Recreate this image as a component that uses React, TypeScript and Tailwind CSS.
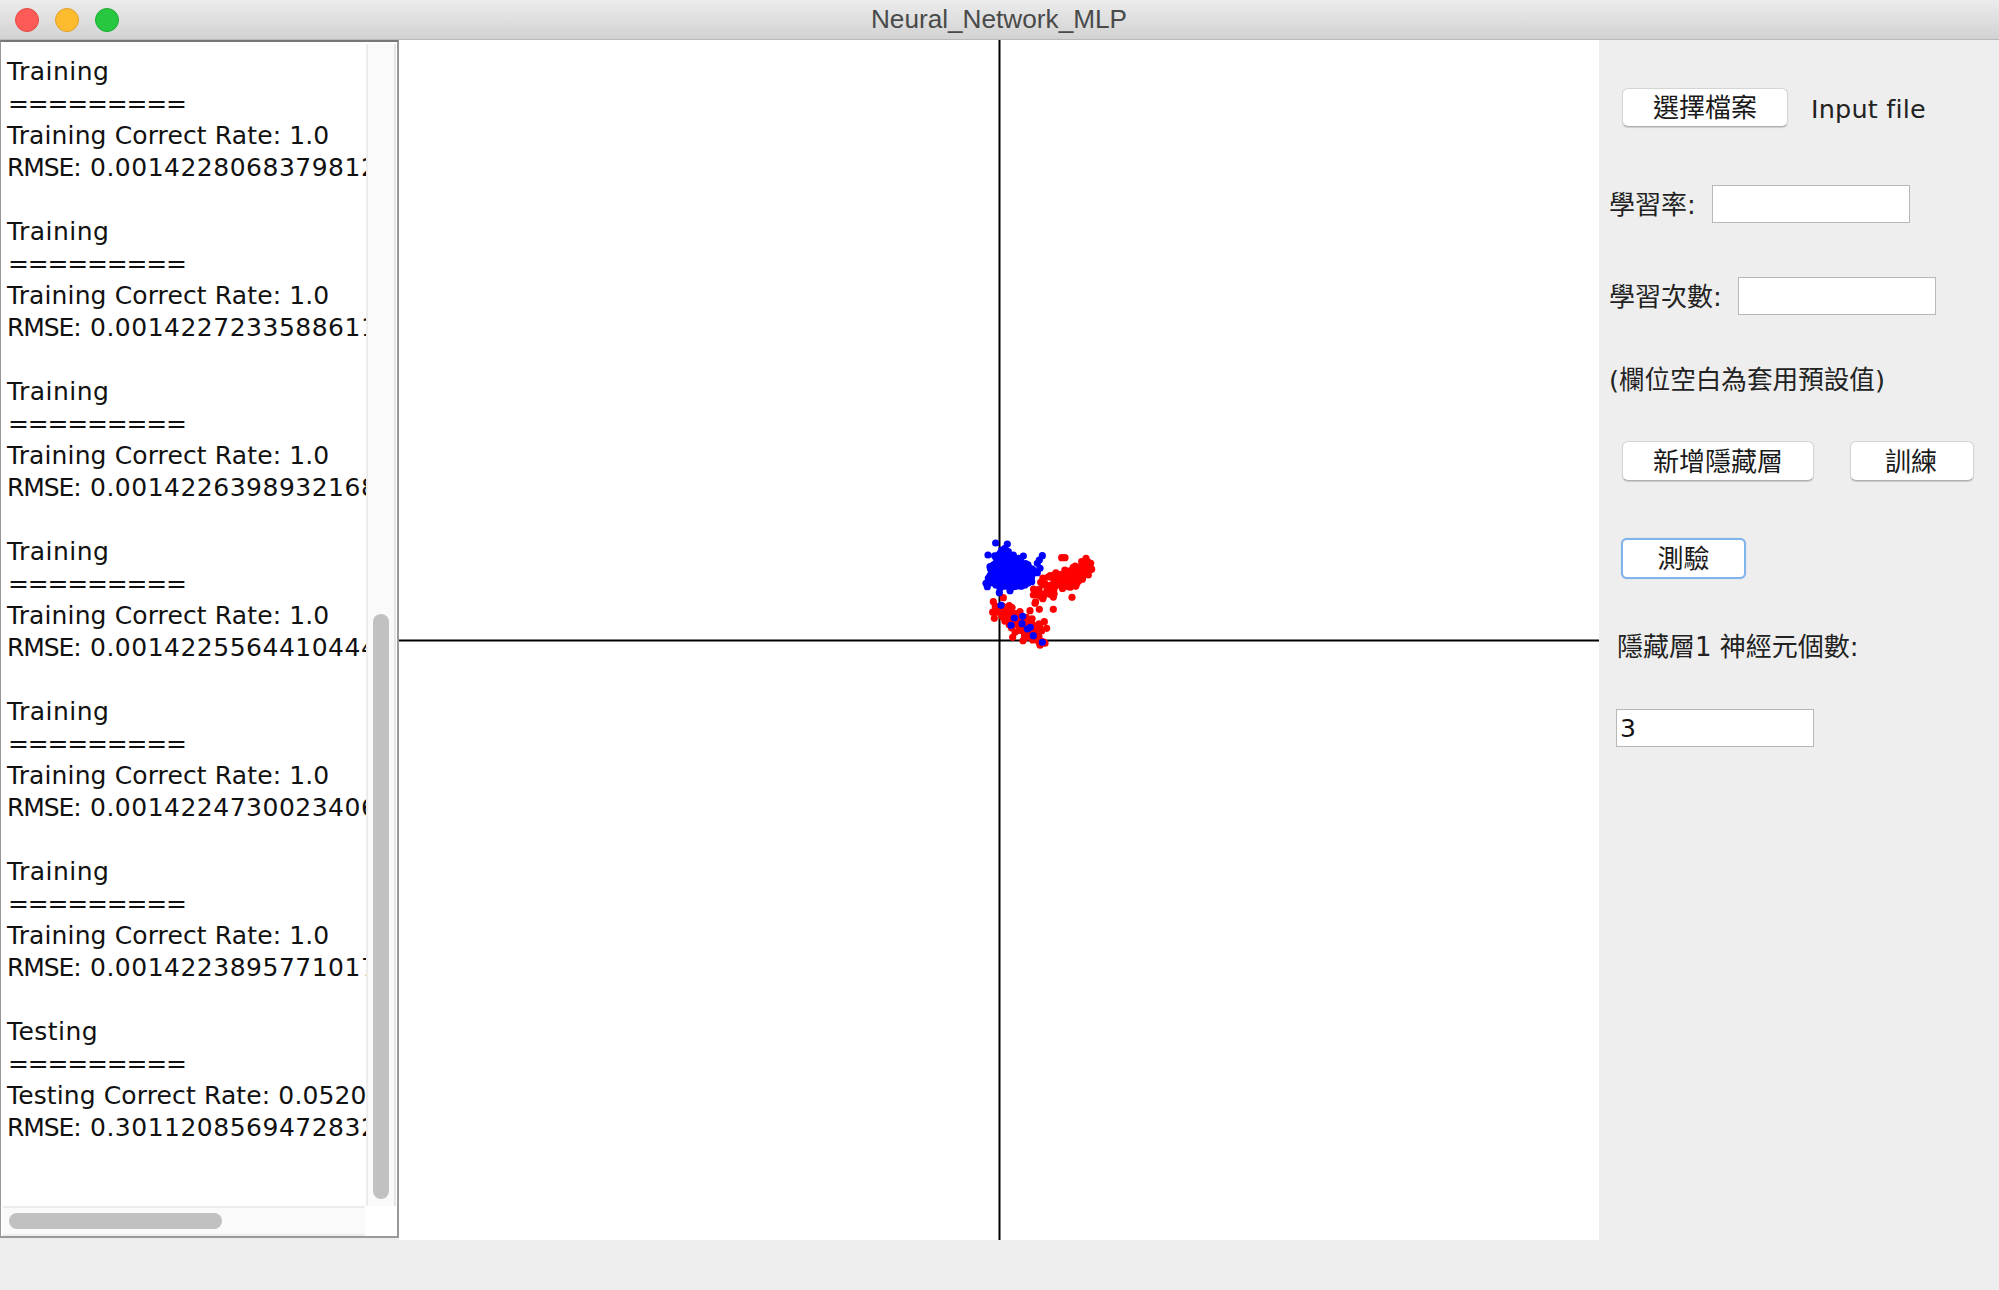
import React from "react";

const LOG_FONT = "font-['DejaVu_Sans','Noto_Sans_CJK_TC',sans-serif]";

const blocks = [
  ["Training", "Training Correct Rate: 1.0", "0.001422806837981234"],
  ["Training", "Training Correct Rate: 1.0", "0.001422723358861134"],
  ["Training", "Training Correct Rate: 1.0", "0.001422639893216834"],
  ["Training", "Training Correct Rate: 1.0", "0.001422556441044434"],
  ["Training", "Training Correct Rate: 1.0", "0.001422473002340634"],
  ["Training", "Training Correct Rate: 1.0", "0.001422389577101734"],
  ["Testing", "Testing Correct Rate: 0.052083", "0.301120856947283234"],
];

function rng(seed: number) {
  let a = seed;
  return () => {
    a = (a + 0x6d2b79f5) | 0;
    let t = Math.imul(a ^ (a >>> 15), 1 | a);
    t = (t + Math.imul(t ^ (t >>> 7), 61 | t)) ^ t;
    return ((t ^ (t >>> 14)) >>> 0) / 4294967296;
  };
}
const r = rng(12345);
const blob = (n: number, cx: number, cy: number, sx: number, sy: number) =>
  Array.from({ length: n }, () => {
    const a = r() * Math.PI * 2;
    const d = Math.sqrt(r());
    return [cx + Math.cos(a) * d * sx, cy + Math.sin(a) * d * sy];
  });
const band = (n: number, x1: number, y1: number, x2: number, y2: number, w: number) =>
  Array.from({ length: n }, () => {
    const t = r();
    return [x1 + (x2 - x1) * t + (r() - 0.5) * w, y1 + (y2 - y1) * t + (r() - 0.5) * w];
  });

const blueZoom = [
  ...blob(170, 182, 162, 68, 44),
  ...blob(25, 155, 120, 30, 30),
  [137, 69], [172, 72], [114, 105], [155, 90], [165, 85], [190, 105], [220, 108], [277, 107], [268, 120], [262, 130],
  [270, 145], [262, 158], [245, 185], [112, 200], [108, 190], [148, 218], [180, 212], [150, 205], [150, 100], [175, 95],
  [120, 140], [125, 165], [205, 115], [235, 140], [250, 150], [115, 175],
];
const redZoom = [
  ...band(110, 265, 222, 402, 150, 56),
  ...band(120, 145, 262, 278, 358, 46),
  [335, 113], [345, 113], [408, 115], [422, 130], [272, 187], [366, 232], [310, 268], [268, 268],
  [133, 295], [160, 233], [188, 352], [219, 362], [283, 305], [290, 325], [210, 275], [130, 245], [240, 272],
  [420, 150], [395, 125], [255, 250], [250, 225], [415, 165],
];
const blueOnRed = [
  [153, 256], [193, 294], [218, 289], [183, 316], [216, 311], [232, 327], [241, 322], [250, 347], [277, 367],
];
const toCanvas = (p: number[]) => [551 + p[0] / 3, 480 + p[1] / 3];

function Scatter() {
  return (
    <svg width="1200" height="1200" viewBox="0 0 1200 1200" className="block">
      <rect width="1200" height="1200" fill="#fff" />
      <line x1="600.5" y1="0" x2="600.5" y2="1200" stroke="#000" strokeWidth="2" />
      <line x1="0" y1="600.5" x2="1200" y2="600.5" stroke="#000" strokeWidth="2" />
      {redZoom.map((p, i) => {
        const [x, y] = toCanvas(p);
        return <circle key={"r" + i} cx={x} cy={y} r="3.6" fill="#ff0000" />;
      })}
      {[...blueZoom, ...blueOnRed].map((p, i) => {
        const [x, y] = toCanvas(p);
        return <circle key={"b" + i} cx={x} cy={y} r="3.6" fill="#0000ff" />;
      })}
    </svg>
  );
}

function MacButton({ children, className }: { children: React.ReactNode; className: string }) {
  return (
    <div
      className={
        "flex h-[39px] items-center justify-center rounded-[6px] border border-[#d4d4d4] border-b-[#b0b0b0] bg-white text-[26px] text-[#1a1a1a] shadow-[0_1px_1px_rgba(0,0,0,0.15)] " +
        className
      }
    >
      {children}
    </div>
  );
}

function Field({ value }: { value?: string }) {
  return (
    <div className="flex h-[38px] w-[198px] items-center border border-[#b8b8b8] bg-white pl-[3px] pt-[2px] text-[25px] text-[#111]">
      {value}
    </div>
  );
}

export default function App() {
  return (
    <div className={"flex h-[1290px] w-[1999px] flex-col overflow-hidden bg-[#eeeeee] " + LOG_FONT}>
      <div className="relative flex h-[40px] shrink-0 items-center border-b border-[#b9b9b9] bg-gradient-to-b from-[#ececec] to-[#d2d2d2]">
        <div className="ml-[15px] flex gap-[16px]">
          <span className="h-[24px] w-[24px] rounded-full border border-[#e24b44] bg-[#fc5b57]" />
          <span className="h-[24px] w-[24px] rounded-full border border-[#e1a02a] bg-[#fdbb2e]" />
          <span className="h-[24px] w-[24px] rounded-full border border-[#1aab32] bg-[#27c83f]" />
        </div>
        <div className="absolute inset-x-0 top-0 pr-[1px] text-center font-['Liberation_Sans',sans-serif] text-[26.2px] leading-[38px] text-[#4a4a4a]">
          Neural_Network_MLP
        </div>
      </div>

      <div className="flex h-[1200px] shrink-0">
        <div className="flex h-[1198px] w-[399px] shrink-0 flex-col border-t-2 border-r-2 border-b-2 border-l border-t-[#777] border-r-[#999] border-b-[#999] border-l-[#999] bg-white">
          <div className="flex min-h-0 flex-1">
            <div className="h-full min-w-0 flex-1 overflow-hidden pl-[6px] pt-[14px] text-[25px] leading-[32px] tracking-[0.1px] text-[#111] whitespace-nowrap">
              {blocks.map((b, i) => (
                <div key={i} className="h-[160px]">
                  <div className="tracking-[0.45px]">{b[0]}</div>
                  <div className="pl-[1px] tracking-[-1.2px]">=========</div>
                  <div className="tracking-[0.12px]">{b[1]}</div>
                  <div>
                    <span className="tracking-[-1.1px]">RMSE:</span>
                    <span className="ml-[1px] tracking-[0.5px]"> {b[2]}</span>
                  </div>
                </div>
              ))}
            </div>
            <div className="mr-[1px] mt-[2px] w-[30px] shrink-0 border-x-2 border-x-[#ececec] border-r-[#e6e6e6] bg-[#fafafa] pl-[5px] pt-[570px]">
              <div className="h-[585px] w-[16px] rounded-full bg-[#c1c1c1]" />
            </div>
          </div>
          <div className="flex h-[30px] shrink-0">
            <div className="ml-[2px] flex w-[362px] items-center border-y-2 border-y-[#ececec] bg-[#fafafa] pl-[6px]">
              <div className="h-[16px] w-[213px] rounded-full bg-[#c1c1c1]" />
            </div>
          </div>
        </div>

        <div className="w-[1200px] shrink-0">
          <Scatter />
        </div>

        <div className="min-w-0 flex-1 pt-[48px] text-[26px] leading-[32px] text-[#222]">
          <div className="flex items-center pl-[23px]">
            <MacButton className="w-[166px]">選擇檔案</MacButton>
            <span className="ml-[23px] mt-[2px] text-[25.5px] tracking-[0.2px]">Input file</span>
          </div>

          <div className="mt-[58px] flex items-center pl-[10px]">
            <span className="mt-[2px] w-[103px]">學習率:</span>
            <Field />
          </div>

          <div className="mt-[54px] flex items-center pl-[10px]">
            <span className="mt-[2px] w-[129px]">學習次數:</span>
            <Field />
          </div>

          <div className="mt-[49px] pl-[10px] text-[25.6px]">(欄位空白為套用預設值)</div>

          <div className="mt-[45px] flex pl-[23px]">
            <MacButton className="h-[40px] w-[192px] pt-[1px]">新增隱藏層</MacButton>
            <MacButton className="ml-[36px] h-[40px] w-[124px] pt-[1px] pr-[2px]">訓練</MacButton>
          </div>

          <div className="mt-[57px] pl-[22px]">
            <div className="flex h-[41px] w-[125px] items-center justify-center rounded-[6px] border-2 border-[#82b4ec] bg-white text-[26px] text-[#1a1a1a] shadow-[0_0_1px_#82b4ec]">
              測驗
            </div>
          </div>

          <div className="mt-[52px] pl-[18px]">隱藏層1 神經元個數:</div>

          <div className="mt-[46px] pl-[17px]">
            <Field value="3" />
          </div>
        </div>
      </div>
    </div>
  );
}
